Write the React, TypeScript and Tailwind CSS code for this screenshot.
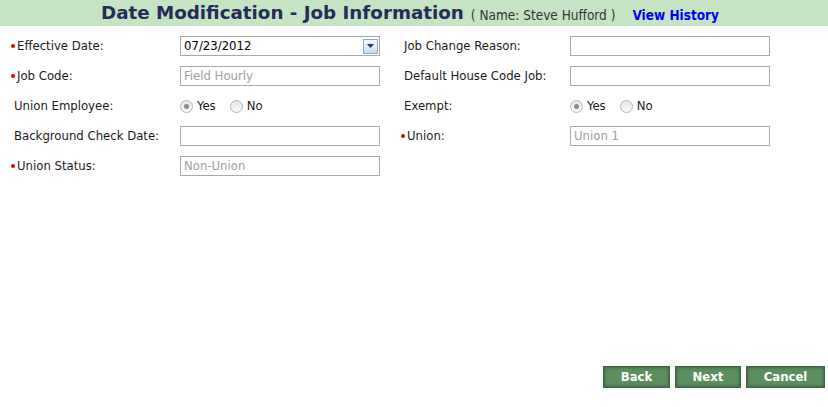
import React from "react";

const font = { fontFamily: '"DejaVu Sans Condensed", "DejaVu Sans", Tahoma, sans-serif' };

const Label: React.FC<{ text: string; required?: boolean }> = ({ text, required }) => (
  <div className="flex items-center h-5 text-[13px] text-[#1a1a1a]">
    {required ? (
      <span className="w-[6px] flex items-center">
        <span className="block w-[4px] h-[4px] rounded-full bg-[#e00000]" />
      </span>
    ) : (
      <span className="w-[3px]" />
    )}
    <span>{text}</span>
  </div>
);

const Box: React.FC<{ value?: string; muted?: boolean }> = ({ value, muted }) => (
  <div
    className={
      "w-[200px] h-5 border border-[#a9a9a9] bg-white px-[3px] text-[13px] leading-[18px] " +
      (muted ? "text-[#a0a0a0]" : "text-black")
    }
  >
    {value}
  </div>
);

const DateBox: React.FC = () => (
  <div className="w-[200px] h-5 border border-[#a9a9a9] bg-white flex items-center pl-[3px] pr-[1px] text-[13px]">
    <span className="flex-1 text-black">07/23/2012</span>
    <span className="w-[15px] h-[15px] border border-[#8fa7c9] bg-gradient-to-b from-[#f4f8fd] to-[#cbdaee] flex items-center justify-center">
      <svg width="7" height="4" viewBox="0 0 7 4">
        <path d="M0 0H7L3.5 4Z" fill="#2b3a55" />
      </svg>
    </span>
  </div>
);

const Radio: React.FC<{ checked?: boolean }> = ({ checked }) => (
  <span className="w-[13px] h-[13px] rounded-full border border-[#b5b5b5] bg-gradient-to-b from-[#e6e6e6] to-[#fbfbfb] flex items-center justify-center">
    {checked && <span className="w-[5px] h-[5px] rounded-full bg-[#8a8a8a]" />}
  </span>
);

const YesNo: React.FC = () => (
  <div className="flex items-center h-5 text-[13px] text-[#1a1a1a]">
    <Radio checked />
    <span className="ml-[4px]">Yes</span>
    <span className="ml-[14px]">
      <Radio />
    </span>
    <span className="ml-[4px]">No</span>
  </div>
);

const GreenButton: React.FC<{ text: string; width: string }> = ({ text, width }) => (
  <button
    className={
      width +
      " h-[22px] bg-[#5b8f5f] border border-[#3f6343] shadow-[inset_0_0_3px_1px_#3f6a43] text-white font-bold text-[13px] flex items-center justify-center"
    }
  >
    {text}
  </button>
);

export default function App() {
  return (
    <div className="w-[828px] h-[407px] bg-white relative" style={font}>
      <div className="h-[26px] bg-[#c4e4c3] flex items-end pb-[1px] pl-[101px]">
        <h1
          className="text-[18.3px] leading-[24px] font-bold text-[#262c5a]"
          style={{ fontFamily: '"DejaVu Sans", Verdana, sans-serif' }}
        >
          Date Modification - Job Information
        </h1>
        <span className="ml-[7px] text-[13.5px] leading-[20px] text-[#333]">( Name: Steve Hufford )</span>
        <a className="ml-[17px] text-[13.5px] leading-[20px] font-bold text-[#0000ee]">View History</a>
      </div>

      <div className="pt-[10px] pl-[11px] grid grid-cols-[169px_221px_169px_200px] gap-y-[10px]">
        <Label text="Effective Date:" required />
        <DateBox />
        <Label text="Job Change Reason:" />
        <Box />

        <Label text="Job Code:" required />
        <Box value="Field Hourly" muted />
        <Label text="Default House Code Job:" />
        <Box />

        <Label text="Union Employee:" />
        <YesNo />
        <Label text="Exempt:" />
        <YesNo />

        <Label text="Background Check Date:" />
        <Box />
        <Label text="Union:" required />
        <Box value="Union 1" muted />

        <Label text="Union Status:" required />
        <Box value="Non-Union" muted />
      </div>

      <div className="absolute right-[3px] top-[366px] flex gap-[5px]">
        <GreenButton text="Back" width="w-[67px]" />
        <GreenButton text="Next" width="w-[66px]" />
        <GreenButton text="Cancel" width="w-[79px]" />
      </div>
    </div>
  );
}
